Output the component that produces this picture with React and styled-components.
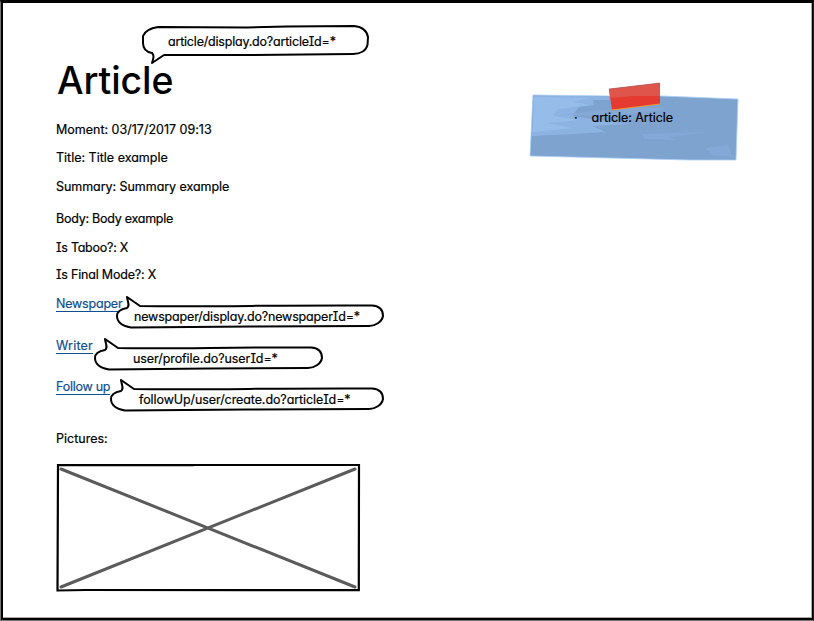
import React from "react";
import styled, { createGlobalStyle } from "styled-components";

const GlobalStyle = createGlobalStyle`
  * { box-sizing: border-box; }
  body {
    margin: 0;
    background: #fff;
    color: #000;
    font-family: Inter, sans-serif;
    font-size: 12.5px;
    line-height: 16px;
    -webkit-text-stroke: 0.2px currentColor;
    font-feature-settings: "cv11", "cv08", "calt" 0;
  }
`;

const Window = styled.main`
  display: flex;
  justify-content: space-between;
  width: 814px;
  height: 621px;
  overflow: hidden;
  border-style: solid;
  border-width: 3px 1px 1px 1px;
  border-color: #000 #1c201d #777 #777;
  box-shadow: inset 2px 0 #000, inset -1px 0 #000, inset 0 -2px #000, inset -2px -3px #a5aba6;
`;

const Details = styled.section`
  display: flex;
  flex-direction: column;
  align-items: flex-start;
  padding: 60px 0 0 55px;
`;

const Heading = styled.h1`
  position: relative;
  margin: 0 0 0 1px;
  height: 36px;
  font-size: 37.5px;
  line-height: 36px;
  font-weight: 500;
  letter-spacing: -0.1px;
  -webkit-text-stroke: 0;
`;

const Row = styled.div`
  position: relative;
  height: 16px;
  margin-top: ${(p) => p.$gap}px;
  white-space: pre;
  letter-spacing: ${(p) => p.$spacing || 0}px;
`;

const Link = styled.a`
  display: block;
  height: 16px;
  color: #0e4f93;
  border-bottom: 1px solid #0e4f93;
`;

const Callout = styled.div`
  position: absolute;
  left: ${(p) => p.$x}px;
  top: ${(p) => p.$y}px;
  width: ${(p) => p.$w}px;
  height: ${(p) => p.$h}px;
`;

const Outline = styled.svg`
  display: block;
  overflow: visible;
  fill: #fff;
  stroke: #000;
  stroke-width: 2;
  stroke-linejoin: round;
  stroke-linecap: round;
`;

const CalloutText = styled.span`
  position: absolute;
  left: ${(p) => p.$x}px;
  top: ${(p) => p.$y}px;
  color: #000;
  font-size: 12.5px;
  font-weight: 400;
  line-height: 16px;
  white-space: pre;
  letter-spacing: ${(p) => p.$spacing}px;
  -webkit-text-stroke: 0.2px currentColor;
`;

const Placeholder = styled.svg`
  display: block;
  margin-top: 17px;
`;

const Note = styled.aside`
  position: relative;
  width: 212px;
  height: 82px;
  margin: 77px 72px 0 0;
`;

const NotePaper = styled.svg`
  position: absolute;
  inset: 0;
`;

const NoteList = styled.ul`
  position: relative;
  display: flex;
  margin: 0;
  padding: 30px 0 0 45px;
  list-style: none;
`;

const NoteItem = styled.li`
  display: flex;
  gap: 14px;
  letter-spacing: -0.06px;
`;

function LinkCallout({ x, width, textX, spacing, children }) {
  const right = width - 1;
  return (
    <Callout $x={x} $y={0} $w={width} $h={32}>
      <Outline width={width} height="32" viewBox={`0 0 ${width} 32`}>
        <path
          d={`M11 12 C14 10 12 7 11 1 L24 10 C${width * 0.35} 11 ${width * 0.6} 9 ${width - 12} 9.500 C${right - 2} 10 ${right} 15 ${right} 20 C${right - 1} 26 ${right - 8} 30 ${width - 15} 30 L${width * 0.5} 30.500 L15 31.500 C7 30 1 26 1 20 C1 16 5 13 11 12 Z`}
        />
      </Outline>
      <CalloutText $x={textX} $y={13} $spacing={spacing}>{children}</CalloutText>
    </Callout>
  );
}

export default function App() {
  return (
    <>
      <GlobalStyle />
      <Window>
        <Details>
          <Heading>
            Article
            <Callout $x={85} $y={-39} $w={228} $h={40}>
              <Outline width="228" height="40" viewBox="0 0 228 40">
                <path d="M16 3 L105 3.5 L145 2.5 L212 2 C221 3 225 7 226 13 L225.5 21 C224 27 218 30 211 30 L105 31 L22 31 L10 39 C12 33 12 31 10 29 C4 28 1 24 1 19 L1 12 C3 7 9 4 16 3 Z" />
              </Outline>
              <CalloutText $x={26} $y={10} $spacing={-0.2}>article/display.do?articleId=*</CalloutText>
            </Callout>
          </Heading>
          <Row $gap={23}>Moment: 03/17/2017 09:13</Row>
          <Row $gap={12}>Title: Title example</Row>
          <Row $gap={13} $spacing={-0.05}>Summary: Summary example</Row>
          <Row $gap={16} $spacing={-0.25}>Body: Body example</Row>
          <Row $gap={13} $spacing={-0.25}>Is Taboo?: X</Row>
          <Row $gap={11} $spacing={-0.2}>Is Final Mode?: X</Row>
          <Row $gap={13} $spacing={-0.2}>
            <Link>Newspaper</Link>
            <LinkCallout x={60} width={268} textX={18} spacing={-0.17}>newspaper/display.do?newspaperId=*</LinkCallout>
          </Row>
          <Row $gap={26} $spacing={0.2}>
            <Link>Writer</Link>
            <LinkCallout x={38} width={229} textX={39} spacing={-0.08}>user/profile.do?userId=*</LinkCallout>
          </Row>
          <Row $gap={25} $spacing={-0.25}>
            <Link>Follow up</Link>
            <LinkCallout x={54} width={274} textX={29} spacing={-0.09}>followUp/user/create.do?articleId=*</LinkCallout>
          </Row>
          <Row $gap={36}>Pictures:</Row>
          <Placeholder width="305" height="128" viewBox="0 0 305 128">
            <path d="M2 1.2 L137 1.2 L137 0.9 L303 0.9 L302.8 126.2 L30 126 L1.5 126.5 Z" fill="#fff" stroke="#000" strokeWidth="2.2" />
            <path d="M5 5 L299 123 M299 5 L5 123" stroke="#5b5b5b" strokeWidth="3" strokeLinecap="round" />
          </Placeholder>
        </Details>
        <Note>
          <NotePaper width="212" height="82" viewBox="0 0 212 82">
            <path d="M4 15 L80 16 L133 16 L209 19 L207 80 L160 80 L1 76 Z" fill="#7fa3cf" stroke="#a9d0f5" strokeWidth="0.8" />
            <path d="M4 16 L80 16 L80 20 L64 20 L65 25 L50 27 L43 36 L70 40 L100 44 L63 46 L77 52 L45 54 L3 56 Z" fill="#8db3e2" />
            <path d="M5 17 L60 18 L44 22 L62 25 L29 29 L24 36 L51 40 L18 43 L43 48 L4 52 Z" fill="#9cc3f0" opacity=".6" />
            <path d="M30 35 L64 31 L104 27 L139 29 L101 34 L66 36 Z M113 54 L178 52 L140 57 L147 60 L116 59 Z M177 68 L199 65 L204 77 L183 75 Z" fill="#88addc" opacity=".6" />
            <path d="M80 9 L131 3 L131 24 L83 30 Z" fill="#e43a2f" />
            <path d="M80 9 L131 3 L131 16 L105 16 L81 18 Z" fill="#df554c" />
            <path d="M131 24 L83 30" stroke="#f29b2e" strokeWidth="0.9" />
            <path d="M80 9 L131 3" stroke="#9d6260" strokeWidth="0.6" />
          </NotePaper>
          <NoteList>
            <NoteItem><span>·</span><span>article: Article</span></NoteItem>
          </NoteList>
        </Note>
      </Window>
    </>
  );
}
